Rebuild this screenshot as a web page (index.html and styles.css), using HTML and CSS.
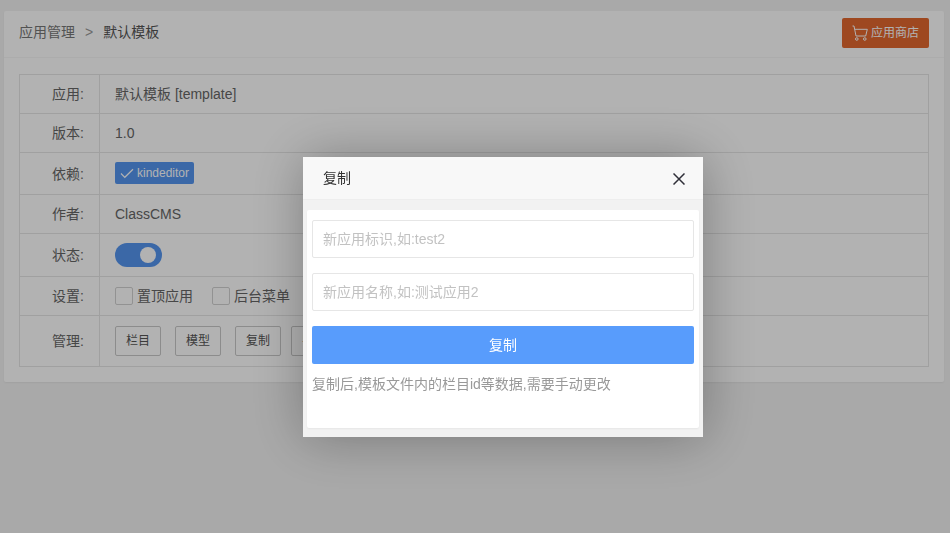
FILE: index.html
```html
<!DOCTYPE html>
<html lang="zh-CN">
<head>
<meta charset="utf-8">
<title>默认模板</title>
<link rel="stylesheet" href="styles.css">
</head>
<body>
<main class="card">
  <header class="card-head">
    <nav class="crumbs">
      <span class="crumb-link">应用管理</span>
      <span class="crumb-sep">&gt;</span>
      <span class="crumb-now">默认模板</span>
    </nav>
    <button class="store-btn" type="button">
      <svg class="cart" viewBox="0 0 20 20" width="20" height="20" fill="none" stroke="currentColor" stroke-width="1">
        <path d="M1.5 2H3l2 10h9.7l1.6-6.7H3.7"/>
        <circle cx="5.8" cy="15" r="1.3"/>
        <circle cx="13.8" cy="15" r="1.3"/>
      </svg>
      <span>应用商店</span>
    </button>
  </header>
  <div class="card-body">
    <table class="info">
      <tbody>
        <tr class="row-39"><th>应用:</th><td>默认模板 [template]</td></tr>
        <tr class="row-39"><th>版本:</th><td>1.0</td></tr>
        <tr class="row-42"><th>依赖:</th><td>
          <span class="dep">
            <svg viewBox="0 0 14 14" width="14" height="14" fill="none" stroke="currentColor" stroke-width="1.2"><path d="M1 7.5l3.8 3.8L13 3.2"/></svg>
            <span>kindeditor</span>
          </span>
        </td></tr>
        <tr class="row-39"><th>作者:</th><td>ClassCMS</td></tr>
        <tr class="row-43"><th>状态:</th><td><span class="switch"><span class="knob"></span></span></td></tr>
        <tr class="row-39"><th>设置:</th><td>
          <div class="checks">
            <label class="check"><span class="box"></span>置顶应用</label>
            <label class="check"><span class="box"></span>后台菜单</label>
          </div>
        </td></tr>
        <tr class="row-51"><th>管理:</th><td>
          <div class="actions">
            <button class="act" type="button">栏目</button>
            <button class="act" type="button">模型</button>
            <button class="act" type="button">复制</button>
            <button class="act act-last" type="button">导出</button>
          </div>
        </td></tr>
      </tbody>
    </table>
  </div>
</main>

<div class="overlay"></div>

<section class="dialog">
  <header class="dialog-head">
    <span>复制</span>
    <svg class="close" viewBox="0 0 12 12" width="12" height="12" fill="none" stroke="currentColor" stroke-width="1.5"><path d="M.5.5l11 11M11.5.5l-11 11"/></svg>
  </header>
  <div class="dialog-panel">
    <input class="field" type="text" placeholder="新应用标识,如:test2">
    <input class="field" type="text" placeholder="新应用名称,如:测试应用2">
    <button class="submit" type="button">复制</button>
    <p class="hint">复制后,模板文件内的栏目id等数据,需要手动更改</p>
  </div>
</section>
</body>
</html>
```
FILE: styles.css
```css
* { box-sizing: border-box; }
html, body { height: 100%; }
body {
  margin: 0;
  padding: 11px 6px 0 4px;
  background: #f2f2f2;
  font: 14px/20px "Liberation Sans", "Noto Sans CJK SC", sans-serif;
  color: #666;
  overflow: hidden;
}
button, input { font: inherit; }

.card {
  background: #fff;
  border-radius: 2px;
  box-shadow: 0 1px 2px rgba(0,0,0,.05);
  height: 371px;
}
.card-head {
  height: 47px;
  padding: 7px 15px 0;
  border-bottom: 1px solid #f6f6f6;
  display: flex;
  justify-content: space-between;
  align-items: flex-start;
}
.crumbs { display: flex; align-items: center; height: 28px; }
.crumb-link { color: #777; }
.crumb-sep { color: #999; margin: 0 10px; }
.crumb-now { color: #555; }
.store-btn {
  width: 87px;
  height: 30px;
  padding: 0 0 0 9px;
  display: flex;
  align-items: center;
  background: #e2672f;
  color: #fff;
  border: 0;
  border-radius: 2px;
  font-size: 12px;
}
.cart { flex: none; margin-top: 1px; }

.card-body { padding: 16px 15px 0; }
.info {
  width: 100%;
  border-collapse: collapse;
  table-layout: fixed;
}
.info th, .info td {
  border: 1px solid #e6e6e6;
  padding: 0 15px;
  vertical-align: middle;
  font-weight: 400;
}
.info th { width: 80px; text-align: right; padding-right: 15px; }
.row-39 { height: 39px; }
.row-42 { height: 42px; }
.row-43 { height: 43px; }
.row-51 { height: 51px; }

.dep {
  display: inline-flex;
  align-items: center;
  gap: 3px;
  height: 22px;
  width: 79px;
  padding-left: 5px;
  margin-bottom: 2px;
  vertical-align: middle;
  background: #5595f0;
  color: #fff;
  border-radius: 2px;
  font-size: 12px;
  white-space: nowrap;
}
.switch {
  display: block;
  position: relative;
  width: 47px;
  height: 24px;
  background: #5595f0;
  border-radius: 12px;
}
.knob {
  position: absolute;
  top: 4px;
  right: 6px;
  width: 16px;
  height: 16px;
  background: #fff;
  border-radius: 50%;
}
.checks { display: flex; gap: 19px; }
.check { display: flex; align-items: center; gap: 4px; }
.box {
  width: 18px;
  height: 18px;
  border: 1px solid #d2d2d2;
  border-radius: 2px;
  background: #fff;
}
.actions { display: flex; gap: 14px; }
.act {
  width: 46px;
  height: 30px;
  padding: 0;
  background: #fff;
  border: 1px solid #c9c9c9;
  border-radius: 2px;
  color: #555;
  font-size: 12px;
}
.act-last { margin-left: -4px; }

.overlay {
  position: fixed;
  inset: 0;
  background: rgba(0,0,0,.3);
}
.dialog {
  position: fixed;
  left: 303px;
  top: 157px;
  width: 400px;
  height: 280px;
  background: #f2f2f2;
  box-shadow: 1px 1px 50px rgba(0,0,0,.3);
}
.dialog-head {
  height: 43px;
  padding: 0 18px 0 20px;
  display: flex;
  justify-content: space-between;
  align-items: center;
  background: #f8f8f8;
  border-bottom: 1px solid #eee;
  color: #333;
}
.close { color: #2f2f38; margin-top: 1px; }
.dialog-panel {
  margin: 10px 4px 0;
  height: 218px;
  padding: 10px 5px 0;
  background: #fff;
  border-radius: 2px;
  box-shadow: 0 1px 2px rgba(0,0,0,.05);
}
.field {
  display: block;
  width: 100%;
  height: 38px;
  margin-bottom: 15px;
  padding: 0 10px;
  border: 1px solid #e6e6e6;
  border-radius: 2px;
  background: #fff;
  color: #333;
  outline: none;
}
.field::placeholder { color: #c2c2c2; }
.submit {
  display: block;
  width: 100%;
  height: 38px;
  padding: 0;
  background: #589cfc;
  color: #fff;
  border: 0;
  border-radius: 2px;
}
.hint { margin: 10px 0 0; color: #999; }
```
